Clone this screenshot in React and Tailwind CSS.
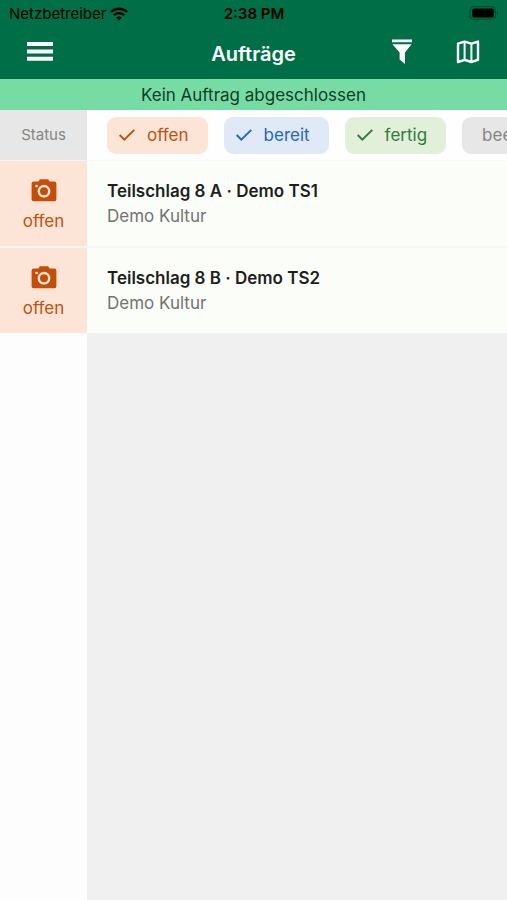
import React, { useState } from "react";

const FILTERS = [
  { id: "offen", label: "offen", on: "bg-[#fce4d7] text-[#bd5310]" },
  { id: "bereit", label: "bereit", on: "bg-[#e0eaf6] text-[#2566c0]" },
  { id: "fertig", label: "fertig", on: "bg-[#e2f0da] text-[#2f7d3b]" },
  { id: "beendet", label: "beendet", on: "bg-[#e7e7e7] text-[#858585]" },
];

const ORDERS = [
  { id: 1, title: "Teilschlag 8 A · Demo TS1", crop: "Demo Kultur", status: "offen" },
  { id: 2, title: "Teilschlag 8 B · Demo TS2", crop: "Demo Kultur", status: "offen" },
];

const WifiIcon = () => (
  <svg width="18" height="14" viewBox="0 0 18 14" fill="none" stroke="currentColor" strokeWidth="2.4" aria-hidden="true">
    <path d="M0.9 5C5.4 0.6 12.6 0.6 17.1 5" />
    <path d="M3.9 8.2C6.8 5.4 11.2 5.4 14.1 8.2" />
    <path d="M9 13.4L6.2 10.6C7.8 9.2 10.2 9.2 11.8 10.6Z" fill="currentColor" stroke="none" />
  </svg>
);

const BatteryIcon = () => (
  <svg width="30" height="14" viewBox="0 0 30 14" aria-hidden="true">
    <rect x="1" y="0.75" width="25.5" height="12.5" rx="4" fill="none" stroke="#004a2e" strokeWidth="1.2" />
    <rect x="3.2" y="2.6" width="21.6" height="8.8" rx="1.6" fill="#000" />
    <path d="M28 4.6C29.6 5.4 29.6 8.6 28 9.4Z" fill="#004a2e" />
  </svg>
);

const MenuIcon = () => (
  <svg width="26" height="20" viewBox="0 0 26 20" fill="currentColor" aria-hidden="true">
    <path d="M0 0H26V4H0ZM0 7.4H26V11.4H0ZM0 14.8H26V18.8H0Z" />
  </svg>
);

const FilterIcon = () => (
  <svg width="20" height="26" viewBox="0 0 20 26" fill="currentColor" aria-hidden="true">
    <path d="M0 0.4H20V3.2H0ZM0.4 5.2H19.6L13 13.4V25L7.6 20.6V13.4Z" />
  </svg>
);

const MapIcon = () => (
  <svg width="24" height="24" viewBox="0 0 24 24" fill="none" stroke="currentColor" strokeWidth="2.4" strokeLinejoin="round" aria-hidden="true">
    <path d="M2 3.6L8.6 1.6L15.4 3.6L22 1.6V19.8L15.4 22L8.6 19.8L2 22Z" />
    <path d="M8.6 1.6V19.8M15.4 3.6V22" strokeWidth="2" />
  </svg>
);

const CheckIcon = () => (
  <svg width="16" height="12" viewBox="0 0 16 12" fill="none" stroke="currentColor" strokeWidth="2" aria-hidden="true">
    <path d="M0.7 6L5.3 10.6L15.3 0.9" />
  </svg>
);

const CameraIcon = () => (
  <svg width="26" height="24" viewBox="0 0 26 24" aria-hidden="true">
    <path
      d="M8.4 0.8Q8.4 0.2 9.2 0.2H16.8Q17.6 0.2 17.6 0.8L18.4 2.4H23.4Q25.4 2.4 25.4 4.4V20.2Q25.4 22.2 23.4 22.2H2.6Q0.6 22.2 0.6 20.2V4.4Q0.6 2.4 2.6 2.4H7.6Z"
      fill="#c14f08"
    />
    <circle cx="13" cy="12.2" r="5.2" fill="none" stroke="#fce4d7" strokeWidth="2.4" />
    <circle cx="5.6" cy="7" r="1.3" fill="#fce4d7" />
  </svg>
);

const FilterChip = ({ filter, checked, onToggle }) => (
  <button
    type="button"
    aria-pressed={checked}
    onClick={onToggle}
    className={`flex h-[37px] shrink-0 items-center gap-3 rounded-[9px] pr-[19px] text-[17px] ${
      checked ? "pl-3" : "pl-5"
    } ${filter.on}`}
  >
    {checked ? <CheckIcon /> : null}
    <span className="pt-0.5">{filter.label}</span>
  </button>
);

const OrderRow = ({ order }) => (
  <li className="flex border-b-2 border-[#f6f7f4] last:border-b-0">
    <div className="flex h-[85px] w-[87px] shrink-0 flex-col items-center justify-center gap-1.5 bg-[#fce4d7] pt-1 text-[#bd5310]">
      <CameraIcon />
      <span className="text-[17px] leading-6">{order.status}</span>
    </div>
    <div className="flex min-w-0 flex-1 flex-col justify-center bg-[#fbfdf8] pl-5">
      <h2 className="truncate text-[17px] font-semibold leading-[25px] text-[#1d1f1d]">{order.title}</h2>
      <p className="truncate text-[17px] leading-[25px] text-[#727472]">{order.crop}</p>
    </div>
  </li>
);

export default function App() {
  const [active, setActive] = useState(["offen", "bereit", "fertig"]);

  const toggle = (id) =>
    setActive((prev) => (prev.includes(id) ? prev.filter((item) => item !== id) : [...prev, id]));

  return (
    <div className="flex min-h-screen flex-col bg-[#f0f0f0] font-['Inter','Liberation_Sans',sans-serif]">
      <header className="bg-[#006e46]">
        <div className="grid h-7 grid-cols-[1fr_auto_1fr] items-center pl-[9px] pr-2 text-[15px] text-black">
          <div className="flex items-center gap-1">
            <span>Netzbetreiber</span>
            <WifiIcon />
          </div>
          <span className="font-semibold">2:38 PM</span>
          <div className="flex justify-end pb-0.5">
            <BatteryIcon />
          </div>
        </div>
        <div className="grid h-[51px] grid-cols-[1fr_auto_1fr] items-center px-[27px] text-white">
          <div className="flex pb-1">
            <button type="button" aria-label="Menü">
              <MenuIcon />
            </button>
          </div>
          <h1 className="text-xl font-semibold">Aufträge</h1>
          <div className="flex items-center justify-end gap-11 pb-1">
            <button type="button" aria-label="Filter">
              <FilterIcon />
            </button>
            <button type="button" aria-label="Karte">
              <MapIcon />
            </button>
          </div>
        </div>
      </header>
      <p className="h-[31px] bg-[#77dca3] text-center text-[17px] leading-8 text-[#103d27]">
        Kein Auftrag abgeschlossen
      </p>
      <div className="flex h-[51px] border-b border-[#f6f7f4] bg-[#fefefe]">
        <div className="flex w-[87px] shrink-0 items-center justify-center bg-[#e7e7e7] text-[15px] text-[#858585]">
          Status
        </div>
        <div className="flex min-w-0 flex-1 items-center gap-4 overflow-hidden pl-5">
          {FILTERS.map((filter) => (
            <FilterChip
              key={filter.id}
              filter={filter}
              checked={active.includes(filter.id)}
              onToggle={() => toggle(filter.id)}
            />
          ))}
        </div>
      </div>
      <ul>
        {ORDERS.map((order) => (
          <OrderRow key={order.id} order={order} />
        ))}
      </ul>
      <div className="w-[87px] flex-1 bg-[#fdfdfd]" />
    </div>
  );
}
